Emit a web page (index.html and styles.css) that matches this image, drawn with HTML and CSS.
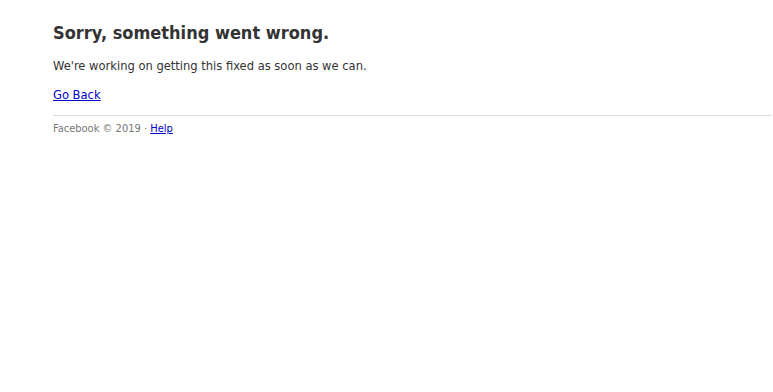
FILE: index.html
```html
<!DOCTYPE html>
<html>
<head>
<meta charset="utf-8">
<link rel="stylesheet" href="styles.css">
</head>
<body>
<div class="page">
  <h1 class="title">Sorry, something went wrong.</h1>
  <p class="msg">We're working on getting this fixed as soon as we can.</p>
  <p class="back"><a href="#">Go Back</a></p>
  <div class="footer">Facebook © 2019 · <a href="#">Help</a></div>
</div>
</body>
</html>
```
FILE: styles.css
```css
html, body { margin: 0; padding: 0; background: #fff; }
body { font-family: "DejaVu Sans Condensed", "DejaVu Sans", sans-serif; color: #333; }
.page { padding: 20px 1px 0 53px; }
.title { margin: 0; font-size: 18px; font-weight: bold; line-height: 26px; color: #333; }
.msg { margin: 12px 0 0; font-size: 12.8px; line-height: 16px; }
.back { margin: 13px 0 0; font-size: 12.8px; line-height: 16px; }
.back a { color: #0000cc; }
.footer { margin-top: 12px; border-top: 1px solid #ddd; padding-top: 6px; font-size: 11px; line-height: 14px; color: #777; }
.footer a { color: #0000cc; }
```
